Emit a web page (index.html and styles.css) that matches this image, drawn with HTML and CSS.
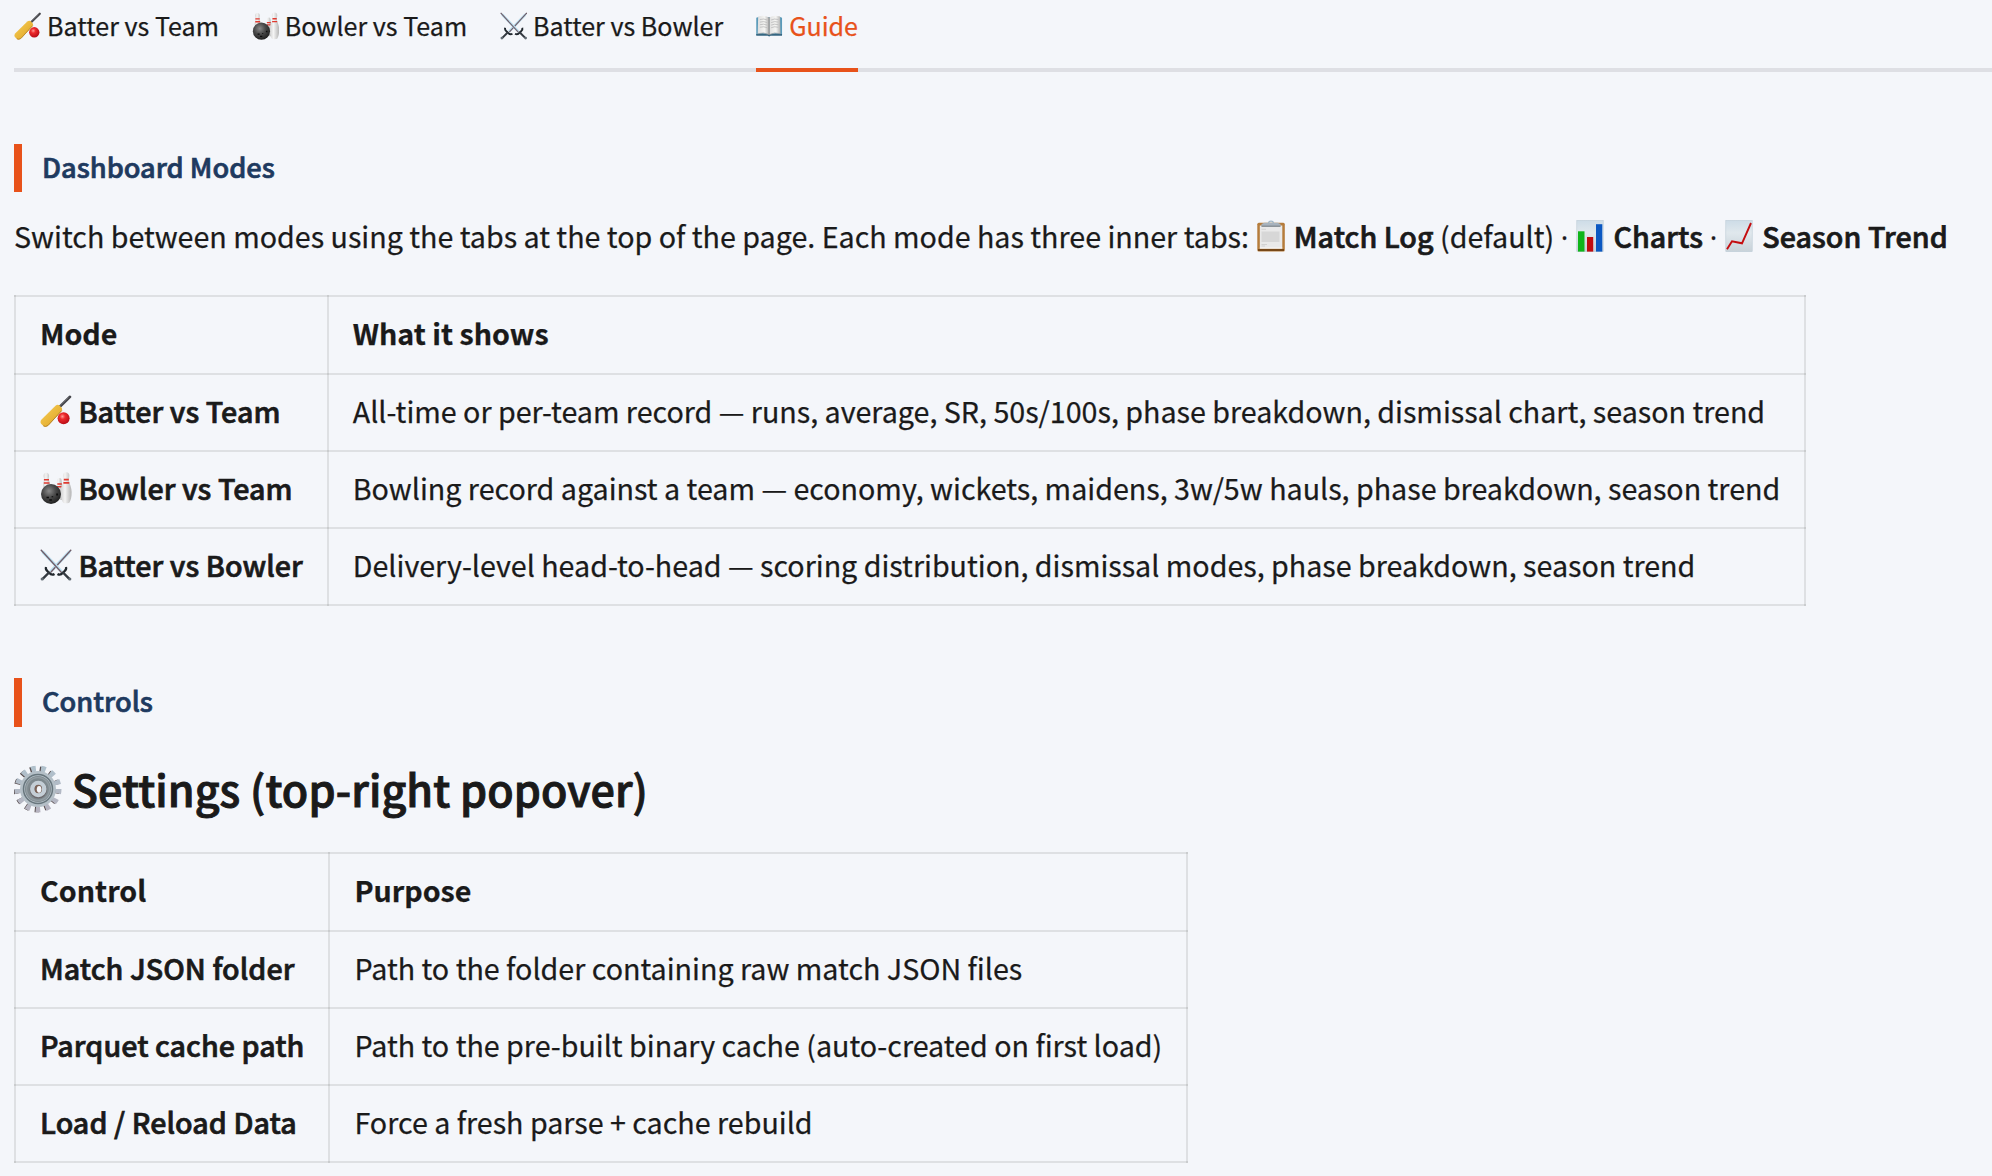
FILE: index.html
```html
<!DOCTYPE html>
<html lang="en">
<head>
    <meta charset="UTF-8">
    <meta name="viewport" content="width=device-width, initial-scale=1.0">
    <title>Guide</title>
    <link rel="stylesheet" href="styles.css">
</head>
<body>

    <!-- icon sprite -->
    <svg class="sprite" width="0" height="0">
        <defs>
            <linearGradient id="gBat" x1="0" y1="0" x2="1" y2="1">
                <stop offset="0" stop-color="#f7cf5a"/>
                <stop offset="0.6" stop-color="#e8b437"/>
                <stop offset="1" stop-color="#b9852a"/>
            </linearGradient>
            <radialGradient id="gRed" cx="0.4" cy="0.35" r="0.65">
                <stop offset="0" stop-color="#ff9a94"/>
                <stop offset="0.35" stop-color="#ee2a2c"/>
                <stop offset="1" stop-color="#b80d17"/>
            </radialGradient>
            <radialGradient id="gBall" cx="0.4" cy="0.35" r="0.65">
                <stop offset="0" stop-color="#8a8a8a"/>
                <stop offset="0.5" stop-color="#4a4a4a"/>
                <stop offset="1" stop-color="#222"/>
            </radialGradient>
            <linearGradient id="gPin" x1="0" y1="0" x2="1" y2="0">
                <stop offset="0" stop-color="#d2d2d2"/>
                <stop offset="0.4" stop-color="#f4f4f4"/>
                <stop offset="1" stop-color="#b4b4b4"/>
            </linearGradient>
            <linearGradient id="gTile" x1="0" y1="0" x2="0" y2="1">
                <stop offset="0" stop-color="#cddce7"/>
                <stop offset="0.4" stop-color="#e0e8ed"/>
                <stop offset="1" stop-color="#c8d2d9"/>
            </linearGradient>
            <linearGradient id="gPage" x1="0" y1="0" x2="1" y2="0">
                <stop offset="0" stop-color="#dedede"/>
                <stop offset="0.6" stop-color="#f5f5f3"/>
                <stop offset="1" stop-color="#b0b0b0"/>
            </linearGradient>
            <linearGradient id="gGear" x1="0" y1="0" x2="0" y2="1">
                <stop offset="0" stop-color="#b0c1cc"/>
                <stop offset="1" stop-color="#b5b3c0"/>
            </linearGradient>
        </defs>

        <symbol id="bat" viewBox="0 0 32 32">
            <path d="M19 12.500L30 1.800" stroke="#45464b" stroke-width="2.600" stroke-linecap="round"/>
            <path d="M20 10.500L28.500 2.400" stroke="#85868b" stroke-width="0.700"/>
            <path d="M15.500 10.800Q17.500 9 19.300 10.300L21.800 13Q22.600 14.500 21.200 16.500L8.500 30.300Q6 32.600 3.500 31L1.300 29Q-0.300 27 1.300 24.800Z" fill="url(#gBat)"/>
            <path d="M21.800 15.500L8 30.500Q5.500 32.300 3.300 30.800" fill="none" stroke="#b78327" stroke-width="1"/>
            <circle cx="23.600" cy="23.300" r="6" fill="url(#gRed)"/>
        </symbol>

        <symbol id="bowling" viewBox="0 0 32 32">
            <path d="M19.500 6C17.400 6 17.100 8 17.800 10.500C18.400 13 16 16 16 20V28H22V12C21.500 9 22 6 19.500 6Z" fill="url(#gPin)"/>
            <path d="M17.300 12H21.800M17.100 14.800H22" stroke="#dc3a31" stroke-width="1.400"/>
            <path d="M6.300 0.800C3.500 0.800 3 3.500 4 6.300C4.300 9 3 11 3 15H10.500C10.500 11 8.500 9 8.800 6.300C9.600 3.500 9 0.800 6.300 0.800Z" fill="url(#gPin)"/>
            <path d="M3.900 7.700H9M3.800 11H9.400" stroke="#e03a30" stroke-width="1.600"/>
            <path d="M26.200 0.300C23 0.300 22.600 3 23.400 5.800C24.500 10.500 20.600 13 20.700 20C20.800 26 22 29 23.300 30.800Q26.300 31.800 29.300 30.800C30.800 28.500 31.700 25 31.600 20C31.500 13 28 10.500 29.100 5.800C29.800 3 29.400 0.300 26.200 0.300Z" fill="url(#gPin)"/>
            <path d="M23.800 7.600H28.800M23.400 10.900H29.300" stroke="#e03a30" stroke-width="1.600"/>
            <circle cx="11" cy="22" r="10" fill="url(#gBall)"/>
            <path d="M6.500 24.800h2.400v1.500h-2.400zM9.300 27.200h2.600v1.500h-2.600zM16.200 21.400h1.800v2h-1.800zM11.600 24.300h1.600v1h-1.600z" fill="#0c0c0c"/>
        </symbol>

        <symbol id="swords" viewBox="0 0 32 32">
            <path d="M31.300 0.700L28 2L9.500 21.500L11.500 23.500L30 4.500Z" fill="#b9deef"/>
            <path d="M31.200 0.800L10.800 23.200" stroke="#705b66" stroke-width="1.300"/>
            <path d="M0.700 0.700L4 2L22.500 21.500L20.500 23.500L2 4.500Z" fill="#b9deef"/>
            <path d="M0.800 0.800L21.500 23.500" stroke="#705b66" stroke-width="1.300"/>
            <path d="M6 18C5 21 7 21.500 9 23.500C10.500 25.500 12 26.500 14.500 25" fill="none" stroke="#20272d" stroke-width="2.200"/>
            <path d="M26 18C27 21 25 21.500 23 23.500C21.500 25.500 20 26.500 17.500 25" fill="none" stroke="#20272d" stroke-width="2.200"/>
            <path d="M9.500 23L2.700 29.800M22.500 23L29.300 29.800" stroke="#343a41" stroke-width="2.400"/>
            <circle cx="2.200" cy="30" r="1.600" fill="#606a72"/>
            <circle cx="29.800" cy="30" r="1.600" fill="#606a72"/>
        </symbol>

        <symbol id="book" viewBox="0 0 32 32">
            <path d="M0.300 6.500L3 5.500H28L30.300 6.500V26.500H0.300Z" fill="#5a9ab9"/>
            <path d="M0.300 25.200H30.300V27.200H17L15.300 28.200L13.600 27.200H0.300Z" fill="#356681"/>
            <path d="M2.500 5Q9 2.800 15.300 6V26Q9 22.800 2 25Z" fill="url(#gPage)"/>
            <path d="M28 5Q21.500 2.800 15.300 6V26Q21.500 22.800 28.500 25Z" fill="url(#gPage)"/>
            <path d="M15.300 6V26.500" stroke="#727272" stroke-width="0.900"/>
            <path d="M4.500 8.500Q9 7 13 9M4.500 11.500Q9 10 13 12M4.500 14.500Q9 13 13 15M4.500 17.500Q9 16 13 18M17.600 9Q21.500 7 26 8.500M17.600 12Q21.500 10 26 11.500M17.600 15Q21.500 13 26 14.500M17.600 18Q21.500 16 26 17.500" fill="none" stroke="#bdbdbd" stroke-width="1"/>
            <path d="M2 25Q9 22.800 15.300 26Q21.500 22.800 28.500 25" fill="none" stroke="#999" stroke-width="0.800"/>
        </symbol>

        <symbol id="clipboard" viewBox="0 0 32 32">
            <rect x="2.300" y="2.800" width="27.500" height="28.700" rx="1.500" fill="#b57c3b"/>
            <path d="M3 30H29" stroke="#774818" stroke-width="2"/>
            <rect x="4.800" y="5.500" width="22.500" height="23" fill="#e9e9e9"/>
            <path d="M4.800 28.100H27.300" stroke="#fafafa" stroke-width="1"/>
            <path d="M6.500 9.300H11M6.500 24.500H12M6.500 26H10" stroke="#c9c9c9" stroke-width="0.700"/>
            <path d="M6.500 11.500H24.500V22H6.500Z" fill="#d7d7d7"/>
            <path d="M6.500 4L9.500 2.800H22.500L25.500 4V6.500H6.500Z" fill="#a8b3bd"/>
            <path d="M6.500 6.200H25.500" stroke="#737a80" stroke-width="1"/>
            <path d="M13.500 3C14 0.500 18 0.500 18.500 3" fill="none" stroke="#9fb5c5" stroke-width="1.400"/>
        </symbol>

        <symbol id="bars" viewBox="0 0 32 32">
            <rect x="1.800" y="0.400" width="26.400" height="31.200" fill="url(#gTile)" stroke="#bccbd6" stroke-width="0.600"/>
            <rect x="3" y="11.300" width="6.500" height="20.300" fill="#0fb51a"/>
            <rect x="12" y="17" width="6.200" height="14.600" fill="#c00b0f"/>
            <rect x="21" y="4.200" width="6.300" height="27.400" fill="#0b58c2"/>
        </symbol>

        <symbol id="trend" viewBox="0 0 32 32">
            <rect x="1.800" y="0.400" width="26.400" height="31.200" fill="url(#gTile)" stroke="#bccbd6" stroke-width="0.600"/>
            <path d="M3 29.300L8 21.200L18 23.300L27 3" fill="none" stroke="#c40d10" stroke-width="1.900"/>
        </symbol>

        <symbol id="gear" viewBox="0 0 48 48">
            <g fill="none">
                <circle cx="22.700" cy="24.300" r="20" stroke="#584d4e" stroke-width="6" stroke-dasharray="4.200 5.467"/>
                <circle cx="24" cy="24" r="20.500" stroke="url(#gGear)" stroke-width="6" stroke-dasharray="4.600 5.308"/>
                <circle cx="24" cy="24" r="15.500" fill="#7e898e" stroke="#b4bfc7" stroke-width="5"/>
                <circle cx="24" cy="24" r="14.500" stroke="#68767d" stroke-width="1.500"/>
                <circle cx="24" cy="24" r="11.500" stroke="#929ca2" stroke-width="1.500"/>
                <circle cx="24.300" cy="24.800" r="8.700" fill="#6c696d"/>
                <circle cx="24.300" cy="24" r="6" stroke="#c4ced6" stroke-width="4.500"/>
                <ellipse cx="24.300" cy="24" rx="3.600" ry="4.200" fill="#7d6459"/>
                <ellipse cx="25.100" cy="24.300" rx="2.300" ry="3.400" fill="#f4f6fa"/>
            </g>
        </symbol>
    </svg>

    <nav class="tabs">
        <a class="tab"><svg class="emoji"><use href="#bat"/></svg> Batter vs Team</a>
        <a class="tab"><svg class="emoji"><use href="#bowling"/></svg> Bowler vs Team</a>
        <a class="tab"><svg class="emoji"><use href="#swords"/></svg> Batter vs Bowler</a>
        <a class="tab active"><svg class="emoji"><use href="#book"/></svg> Guide</a>
    </nav>

    <section class="modes">
        <div class="section-title">Dashboard Modes</div>
        <p>Switch between modes using the tabs at the top of the page. Each mode has three inner tabs: <svg class="emoji"><use href="#clipboard"/></svg> <strong>Match Log</strong> (default) <span class="dot">·</span> <svg class="emoji"><use href="#bars"/></svg> <strong>Charts</strong> <span class="dot">·</span> <svg class="emoji"><use href="#trend"/></svg> <strong>Season Trend</strong></p>
        <table>
            <thead>
                <tr><th>Mode</th><th>What it shows</th></tr>
            </thead>
            <tbody>
                <tr>
                    <td><svg class="emoji"><use href="#bat"/></svg> <strong>Batter vs Team</strong></td>
                    <td>All-time or per-team record — runs, average, SR, 50s/100s, phase breakdown, dismissal chart, season trend</td>
                </tr>
                <tr>
                    <td><svg class="emoji"><use href="#bowling"/></svg> <strong>Bowler vs Team</strong></td>
                    <td>Bowling record against a team — economy, wickets, maidens, 3w/5w hauls, phase breakdown, season trend</td>
                </tr>
                <tr>
                    <td><svg class="emoji"><use href="#swords"/></svg> <strong>Batter vs Bowler</strong></td>
                    <td>Delivery-level head-to-head — scoring distribution, dismissal modes, phase breakdown, season trend</td>
                </tr>
            </tbody>
        </table>
    </section>

    <section class="controls">
        <div class="section-title">Controls</div>
        <h2><svg class="emoji"><use href="#gear"/></svg> Settings (top-right popover)</h2>
        <table>
            <thead>
                <tr><th>Control</th><th>Purpose</th></tr>
            </thead>
            <tbody>
                <tr><td><strong>Match JSON folder</strong></td><td>Path to the folder containing raw match JSON files</td></tr>
                <tr><td><strong>Parquet cache path</strong></td><td>Path to the pre-built binary cache (auto-created on first load)</td></tr>
                <tr><td><strong>Load / Reload Data</strong></td><td>Force a fresh parse + cache rebuild</td></tr>
            </tbody>
        </table>
    </section>

</body>
</html>
```

FILE: styles.css
```css
body {
    margin: 0;
    padding-left: 14px;
    background-color: #f4f6fa;
    color: #1a1a1a;
    font-family: "Noto Sans CJK SC", "Open Sans", sans-serif;
    font-size: 28.655px;
    line-height: 51px;
    overflow: hidden;
    -webkit-text-stroke: 0.250px;
}
.sprite {
    display: block;
}
.emoji {
    width: 32px;
    height: 32px;
    vertical-align: -4px;
}

/* tabs */
.tabs {
    display: flex;
    gap: 32.800px;
    height: 72px;
    box-shadow: inset 0 -4px #dedfe4;
    font-size: 25.070px;
    line-height: 40px;
}
.tab {
    box-sizing: border-box;
    padding-top: 5px;
    border-bottom: 4px solid transparent;
    white-space: nowrap;
}
.tab .emoji {
    width: 27.500px;
    height: 28px;
    vertical-align: -3.500px;
}
.tab.active {
    color: #e8521a;
    border-bottom-color: #e8521a;
}

/* sections */
.modes {
    padding-top: 72px;
}
.controls {
    padding-top: 72.300px;
}
.section-title {
    box-sizing: border-box;
    height: 48.400px;
    border-left: 8px solid #e8521a;
    padding-left: 20px;
    color: #1e3a5f;
    font-size: 27.230px;
    font-weight: 500;
    line-height: 44px;
    -webkit-text-stroke: 0.700px;
}
strong {
    font-weight: 500;
    -webkit-text-stroke: 0.700px;
    letter-spacing: 0.050px;
}
p {
    margin: 17.600px 0 34px;
    white-space: nowrap;
}
.dot {
    display: inline-block;
    width: 8px;
    text-align: center;
    font-family: "Open Sans", sans-serif;
    line-height: 1;
}
h2 {
    margin: 32.300px 0 35px;
    font-size: 43px;
    font-weight: 500;
    line-height: 58px;
    letter-spacing: 0.090px;
    -webkit-text-stroke: 1px;
}
h2 .emoji {
    width: 48px;
    height: 48px;
    vertical-align: -6px;
}

/* tables */
table {
    border-collapse: collapse;
}
th, td {
    border: 2px solid rgba(26, 26, 26, 0.1);
    padding: 10px 24px 14px;
    text-align: left;
    white-space: nowrap;
}
th {
    padding-bottom: 15px;
    font-weight: 700;
}
```
